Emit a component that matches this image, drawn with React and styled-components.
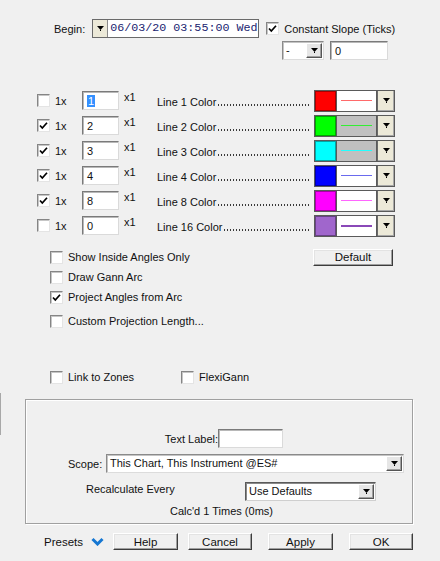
import styled, { createGlobalStyle } from "styled-components";

const Global = createGlobalStyle`
  body {
    margin: 0;
    background: #f0f0f0;
    font-family: "Liberation Sans", Arial, sans-serif;
    font-size: 11px;
    color: #111;
  }
`;

const Window = styled.div`
  position: relative;
  width: 440px;
  height: 561px;
  overflow: hidden;
  background: #f0f0f0;
`;

const EdgeMark = styled.div`
  position: absolute;
  left: 0;
  top: 393px;
  width: 1px;
  height: 42px;
  background: #a8a8a8;
`;

const Row = styled.div`
  display: flex;
  align-items: center;
  height: ${(p) => p.h || 20}px;
  margin-top: ${(p) => p.mt || 0}px;
  padding-left: ${(p) => p.pl || 0}px;
`;

const Label = styled.span`
  white-space: nowrap;
  width: ${(p) => (p.w ? `${p.w}px` : "auto")};
  margin-left: ${(p) => p.ml || 0}px;
  flex-shrink: 0;
`;

const Sunken = styled.div`
  box-sizing: border-box;
  display: flex;
  align-items: center;
  width: ${(p) => p.w}px;
  height: ${(p) => p.h || 19}px;
  margin-left: ${(p) => p.ml || 0}px;
  background: #fff;
  border: 1px solid;
  border-color: #7a7a7a #dadada #dadada #7a7a7a;
  box-shadow: inset 1px 1px 0 #b8b8b8;
  padding-left: 4px;
  flex-shrink: 0;
`;

const Selected = styled.span`
  background: #3390ff;
  color: #fff;
  padding: 0 1px;
`;

const DateCombo = styled.div`
  box-sizing: border-box;
  display: flex;
  width: 167px;
  height: 19px;
  margin-left: 7px;
  border: 1px solid #6a6a6a;
  background: #fff;
`;

const BeigeBtn = styled.div`
  box-sizing: border-box;
  width: ${(p) => p.w || 15}px;
  height: 100%;
  display: flex;
  align-items: center;
  justify-content: center;
  background: #ece9d8;
  border-right: ${(p) => (p.left ? "1px solid #8a8a8a" : "none")};
  border-left: ${(p) => (p.left ? "none" : "1px solid #6a6a6a")};
  box-shadow: ${(p) => (p.left ? "none" : "inset -1px -1px 0 #a8a8a8")};
  flex-shrink: 0;
`;

const DateText = styled.span`
  font-family: "Liberation Mono", "Courier New", monospace;
  font-size: 11.7px;
  color: #1a2470;
  padding-left: 2px;
  line-height: 17px;
  white-space: nowrap;
`;

const Combo = styled.div`
  box-sizing: border-box;
  display: flex;
  align-items: stretch;
  width: ${(p) => p.w}px;
  height: 19px;
  margin-left: ${(p) => p.ml || 0}px;
  background: #fff;
  border: 1px solid;
  border-color: ${(p) => (p.dark ? "#5a5a5a #cfcfcf #cfcfcf #5a5a5a" : "#8a8a8a #dcdcdc #dcdcdc #8a8a8a")};
  box-shadow: inset 1px 1px 0 ${(p) => (p.dark ? "#8a8a8a" : "#c4c4c4")};
  flex-shrink: 0;
`;

const ComboText = styled.span`
  flex: 1;
  padding-left: 3px;
  line-height: 17px;
  white-space: nowrap;
`;

const ComboBtn = styled.div`
  box-sizing: border-box;
  width: 16px;
  margin: 1px;
  display: flex;
  align-items: center;
  justify-content: center;
  background: #e6e6e6;
  border: 1px solid;
  border-color: #fff #555 #555 #fff;
  box-shadow: inset -1px -1px 0 #a0a0a0;
`;

const Box = styled.span`
  box-sizing: border-box;
  display: inline-flex;
  align-items: center;
  justify-content: center;
  width: 13px;
  height: 13px;
  background: #fff;
  border: 1px solid;
  border-color: #858585 #e4e4e4 #e4e4e4 #858585;
  box-shadow: inset 1px 1px 0 #c6c6c6;
  flex-shrink: 0;
`;

const Arrow = () => (
  <svg width="7" height="5" viewBox="0 0 7 5">
    <polygon points="0,0 7,0 3.5,4" fill="#000" />
    <rect x="3" y="4" width="1" height="1" fill="#000" />
  </svg>
);

const Check = ({ on }) => (
  <Box>
    {on && (
      <svg width="9" height="9" viewBox="0 0 9 9">
        <path d="M1 4.5 L3.3 7 L8 1.8" stroke="#000" strokeWidth="1.7" fill="none" />
      </svg>
    )}
  </Box>
);

const CheckItem = styled.div`
  display: flex;
  align-items: center;
  gap: 5px;
  width: ${(p) => (p.w ? `${p.w}px` : "auto")};
  flex-shrink: 0;
`;

const LineRow = styled.div`
  display: flex;
  align-items: center;
  height: 25px;
  padding-left: 37px;
`;

const Cell = styled.div`
  width: ${(p) => p.w}px;
  flex-shrink: 0;
  display: flex;
  align-items: center;
  align-self: ${(p) => (p.up ? "flex-start" : "center")};
  padding-top: ${(p) => (p.up ? 3 : 0)}px;
`;

const Leader = styled.div`
  display: flex;
  align-items: baseline;
  width: 153px;
  margin-left: 18px;
  flex-shrink: 0;
  padding-top: 2px;
  white-space: nowrap;
`;

const DotFill = styled.span`
  flex: 1;
  height: 2px;
  margin-left: 2px;
  background-image: linear-gradient(to right, #3a3a3a 0 1px, transparent 1px 3px);
  background-size: 3px 2px;
  background-repeat: repeat-x;
`;

const ColorPicker = styled.div`
  box-sizing: border-box;
  display: flex;
  width: 81px;
  height: 22px;
  margin-left: 4px;
  border: 1px solid #5a5a5a;
  flex-shrink: 0;
`;

const Swatch = styled.div`
  width: 22px;
  background: ${(p) => p.c};
  box-shadow: inset 0 0 0 1px rgba(0, 0, 0, 0.35);
  border-right: 1px solid #5a5a5a;
`;

const Preview = styled.div`
  width: 40px;
  display: flex;
  align-items: center;
  justify-content: center;
  background: ${(p) => p.bg};
  border-right: 1px solid #5a5a5a;
`;

const Stroke = styled.div`
  width: 31px;
  height: ${(p) => p.t || 1}px;
  background: ${(p) => p.c};
`;

const Button = styled.div`
  box-sizing: border-box;
  width: ${(p) => p.w}px;
  height: 17px;
  margin-left: ${(p) => p.ml || 0}px;
  display: flex;
  align-items: center;
  justify-content: center;
  background: #f0f0f0;
  border: 1px solid;
  border-color: #fff #3c3c3c #3c3c3c #fff;
  box-shadow: inset -1px -1px 0 #a0a0a0, inset 1px 1px 0 #e3e3e3;
  font-size: 11.5px;
  flex-shrink: 0;
`;

const GroupBox = styled.div`
  box-sizing: border-box;
  width: 388px;
  height: 125px;
  margin: 12px 0 0 25px;
  border: 1px solid #a0a0a0;
  box-shadow: inset 1px 1px 0 #fff, 1px 1px 0 #fff;
  padding-top: 29px;
`;

const Presets = styled.div`
  display: flex;
  align-items: center;
  gap: 8px;
  width: 69px;
  padding-left: 44px;
  flex-shrink: 0;
  font-size: 11.5px;
`;

const lines = [
  { on: false, v: "1", name: "Line 1 Color", c: "#ff0000", bg: "#fff", s: "#ff6a6a" },
  { on: true, v: "2", name: "Line 2 Color", c: "#00ff00", bg: "#c0c0c0", s: "#33ee33" },
  { on: true, v: "3", name: "Line 3 Color", c: "#00ffff", bg: "#c0c0c0", s: "#22ffff" },
  { on: true, v: "4", name: "Line 4 Color", c: "#0000ff", bg: "#fff", s: "#6a6aee" },
  { on: true, v: "8", name: "Line 8 Color", c: "#ff00ff", bg: "#fff", s: "#ff66ff" },
  { on: false, v: "0", name: "Line 16 Color", c: "#a066cc", bg: "#fff", s: "#8a48b8", t: 2 },
];

export default function App() {
  return (
    <Window>
      <Global />
      <EdgeMark />

      <Row h={19} mt={19} pl={54}>
        <Label>Begin:</Label>
        <DateCombo>
          <BeigeBtn left>
            <Arrow />
          </BeigeBtn>
          <DateText>06/03/20 03:55:00 Wed</DateText>
        </DateCombo>
        <CheckItem style={{ marginLeft: 7 }}>
          <Check on />
          <Label>Constant Slope (Ticks)</Label>
        </CheckItem>
      </Row>
      <Row h={19} mt={3} pl={282}>
        <Combo w={42}>
          <ComboText>-</ComboText>
          <ComboBtn>
            <Arrow />
          </ComboBtn>
        </Combo>
        <Sunken w={58} ml={6}>0</Sunken>
      </Row>

      <div style={{ marginTop: 28 }}>
        {lines.map((l) => (
          <LineRow key={l.name}>
            <Cell w={18}>
              <Check on={l.on} />
            </Cell>
            <Cell w={27}>1x</Cell>
            <Sunken w={37}>{l.v === "1" ? <Selected>1</Selected> : l.v}</Sunken>
            <Cell w={20} up>
              <Label ml={5}>x1</Label>
            </Cell>
            <Leader>
              <span>{l.name}</span>
              <DotFill />
            </Leader>
            <ColorPicker>
              <Swatch c={l.c} />
              <Preview bg={l.bg}>
                <Stroke c={l.s} t={l.t} />
              </Preview>
              <BeigeBtn w={17}>
                <Arrow />
              </BeigeBtn>
            </ColorPicker>
          </LineRow>
        ))}
      </div>

      <Row mt={9} pl={50}>
        <CheckItem w={263}>
          <Check />
          <Label>Show Inside Angles Only</Label>
        </CheckItem>
        <Button w={80}>Default</Button>
      </Row>
      <Row pl={50}>
        <CheckItem>
          <Check />
          <Label>Draw Gann Arc</Label>
        </CheckItem>
      </Row>
      <Row pl={50}>
        <CheckItem>
          <Check on />
          <Label>Project Angles from Arc</Label>
        </CheckItem>
      </Row>
      <Row mt={4} pl={50}>
        <CheckItem>
          <Check />
          <Label>Custom Projection Length...</Label>
        </CheckItem>
      </Row>
      <Row mt={36} pl={50}>
        <CheckItem w={131}>
          <Check />
          <Label>Link to Zones</Label>
        </CheckItem>
        <CheckItem>
          <Check />
          <Label>FlexiGann</Label>
        </CheckItem>
      </Row>

      <GroupBox>
        <Row h={19} pl={136}>
          <Label w={56} style={{ textAlign: "right" }}>
            Text Label:
          </Label>
          <Sunken w={65} ml={0} />
        </Row>
        <Row h={19} mt={6} pl={42}>
          <Label w={38}>Scope:</Label>
          <Combo w={298}>
            <ComboText>This Chart, This Instrument @ES#</ComboText>
            <ComboBtn>
              <Arrow />
            </ComboBtn>
          </Combo>
        </Row>
        <Row h={19} mt={9} pl={60}>
          <Label w={159} style={{ paddingBottom: 6 }}>
            Recalculate Every
          </Label>
          <Combo w={131} dark>
            <ComboText>Use Defaults</ComboText>
            <ComboBtn>
              <Arrow />
            </ComboBtn>
          </Combo>
        </Row>
        <Row h={16} mt={2} pl={144}>
          <Label>Calc'd 1 Times (0ms)</Label>
        </Row>
      </GroupBox>

      <Row h={17} mt={9}>
        <Presets>
          <span>Presets</span>
          <svg width="13" height="9" viewBox="0 0 13 9">
            <polyline points="1.5,2 6.5,7 11.5,2" stroke="#1677d2" strokeWidth="3" fill="none" />
          </svg>
        </Presets>
        <Button w={65}>Help</Button>
        <Button w={64} ml={10}>Cancel</Button>
        <Button w={65} ml={16}>Apply</Button>
        <Button w={64} ml={16}>OK</Button>
      </Row>
    </Window>
  );
}
